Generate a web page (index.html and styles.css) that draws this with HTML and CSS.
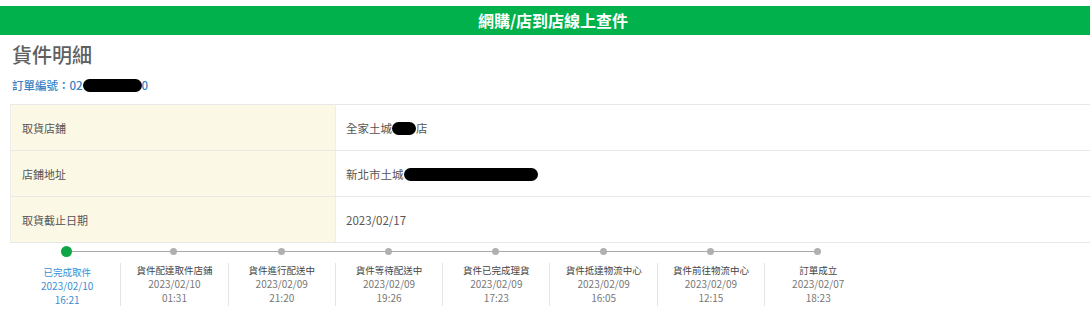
FILE: index.html
```html
<!DOCTYPE html>
<html lang="zh-Hant">
<head>
  <meta charset="UTF-8" />
  <meta name="viewport" content="width=device-width, initial-scale=1" />
  <title>網購/店到店線上查件</title>
  <link rel="stylesheet" href="styles.css">
</head>
<body>
  <div class="topbar">網購/店到店線上查件</div>

  <div class="page">
    <h1 class="title">貨件明細</h1>
    <div class="order">訂單編號：02<span class="mask mask-order"></span>0</div>

    <table class="detail">
      <tr>
        <td class="label">取貨店鋪</td>
        <td class="value">全家土城<span class="mask mask-store"></span>店</td>
      </tr>
      <tr>
        <td class="label">店鋪地址</td>
        <td class="value">新北市土城<span class="mask mask-addr"></span></td>
      </tr>
      <tr>
        <td class="label">取貨截止日期</td>
        <td class="value">2023/02/17</td>
      </tr>
    </table>

    <ul class="timeline">
      <li class="step done">
        <span class="dot"></span>
        <div class="info"><div class="name">已完成取件</div><div>2023/02/10</div><div>16:21</div></div>
      </li>
      <li class="step">
        <span class="dot"></span>
        <div class="info"><div class="name">貨件配達取件店鋪</div><div>2023/02/10</div><div>01:31</div></div>
      </li>
      <li class="step">
        <span class="dot"></span>
        <div class="info"><div class="name">貨件進行配送中</div><div>2023/02/09</div><div>21:20</div></div>
      </li>
      <li class="step">
        <span class="dot"></span>
        <div class="info"><div class="name">貨件等待配送中</div><div>2023/02/09</div><div>19:26</div></div>
      </li>
      <li class="step">
        <span class="dot"></span>
        <div class="info"><div class="name">貨件已完成理貨</div><div>2023/02/09</div><div>17:23</div></div>
      </li>
      <li class="step">
        <span class="dot"></span>
        <div class="info"><div class="name">貨件抵達物流中心</div><div>2023/02/09</div><div>16:05</div></div>
      </li>
      <li class="step">
        <span class="dot"></span>
        <div class="info"><div class="name">貨件前往物流中心</div><div>2023/02/09</div><div>12:15</div></div>
      </li>
      <li class="step">
        <span class="dot"></span>
        <div class="info"><div class="name">訂單成立</div><div>2023/02/07</div><div>18:23</div></div>
      </li>
    </ul>
  </div>
</body>
</html>
```

FILE: styles.css
```css
html {
  overflow: hidden;
}

body {
  margin: 0;
  padding-top: 6px;
  font-family: "Noto Sans CJK TC", "Noto Sans", sans-serif;
  background-color: #fff;
  color: #555;
  width: 1106px;
}

.topbar {
  height: 29px;
  line-height: 29px;
  background-color: #00b14c;
  color: #fff;
  font-size: 16px;
  font-weight: bold;
  text-align: center;
}

.page {
  padding-left: 10px;
}

.title {
  margin: 6px 0 0 2px;
  font-size: 20px;
  line-height: 28px;
  font-weight: 500;
  color: #606060;
}

.order {
  margin: 9px 0 0 2px;
  font-size: 11.5px;
  line-height: 14px;
  font-weight: 500;
  color: #3a80c3;
}

.mask {
  display: inline-block;
  background-color: #000;
  border-radius: 7px;
  vertical-align: middle;
}

.mask-order {
  width: 59px;
  height: 13px;
  margin-top: -2px;
}

.mask-store {
  width: 24px;
  height: 13px;
  margin-top: -2px;
}

.mask-addr {
  width: 134px;
  height: 13px;
  margin-top: -2px;
}

.detail {
  margin-top: 12px;
  width: 1096px;
  border-collapse: collapse;
}

.detail td {
  height: 45px;
  border-top: 1px solid #e8e8e8;
  border-bottom: 1px solid #e8e8e8;
  padding: 0;
}

.label {
  width: 313px;
  padding-left: 11px !important;
  background-color: #fcf8e6;
  border-left: 1px solid #eee;
  border-right: 1px solid #efefe8;
  font-size: 11px;
  color: #555;
}

.value {
  padding-left: 10px !important;
  font-size: 11.5px;
  color: #555;
}

.timeline {
  display: flex;
  list-style: none;
  margin: 0 0 0 3px;
  padding: 0;
}

.step {
  position: relative;
  width: 107.3px;
  flex: none;
  text-align: center;
}

.step::after {
  content: "";
  position: absolute;
  top: 8px;
  left: 53.65px;
  width: 107.3px;
  height: 1px;
  background-color: #aaa;
}

.step:last-child::after {
  display: none;
}

.dot {
  display: block;
  position: relative;
  z-index: 1;
  width: 7px;
  height: 7px;
  margin: 5px auto 0;
  border-radius: 50%;
  background-color: #b0b0b0;
}

.done .dot {
  width: 11px;
  height: 11px;
  margin-top: 3px;
  background-color: #0fa646;
}

.info {
  margin-top: 8px;
  padding-bottom: 1px;
  border-left: 1px solid #e4e4e4;
  font-size: 10px;
  line-height: 14px;
  color: #777;
}

.done .info {
  border-left-color: transparent;
  color: #3a8fd3;
}

.name {
  font-size: 9.5px;
  color: #444;
}

.done .name {
  color: #3a8fd3;
}
```
